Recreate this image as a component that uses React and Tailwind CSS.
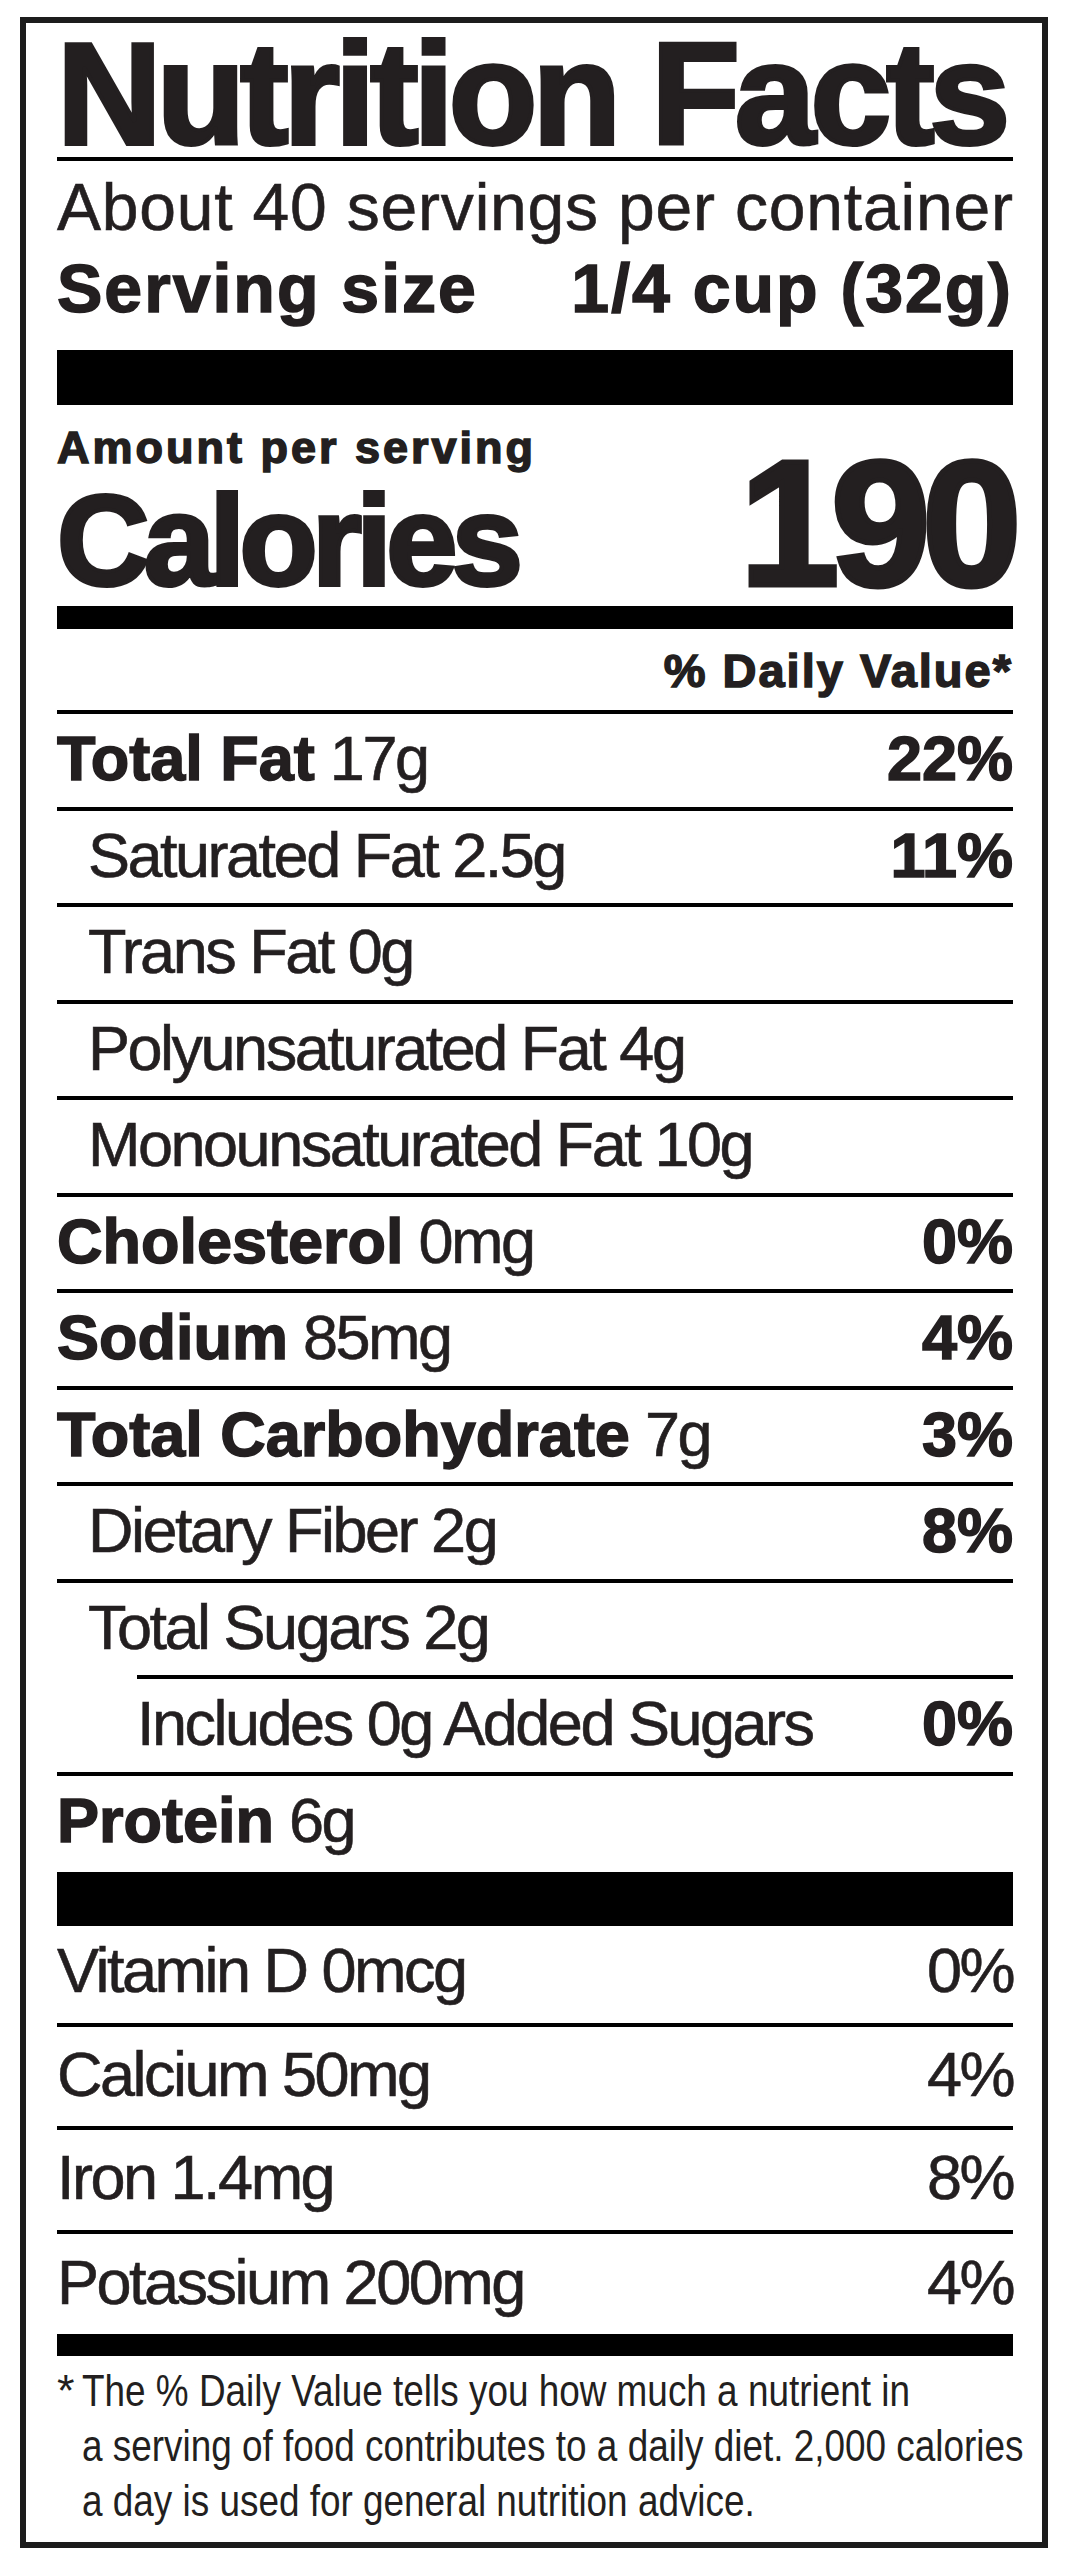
const SANS = "font-['Liberation_Sans',Arial,sans-serif]";
const HEAVY = 'font-bold [-webkit-text-stroke:1.5px_#231f20]';
const BODY = '[-webkit-text-stroke:0.6px_#231f20]';

// nutrient rows between the % Daily Value header and the protein bar
const nutrients = [
  { label: 'Total Fat', amount: '17g', dv: '22%', bold: true, h: 'h-[97px]' },
  { label: 'Saturated Fat', amount: '2.5g', dv: '11%', indent: 'pl-[31px]', h: 'h-[96px]' },
  { label: 'Trans Fat', amount: '0g', indent: 'pl-[31px]', h: 'h-[97px]' },
  { label: 'Polyunsaturated Fat', amount: '4g', indent: 'pl-[31px]', h: 'h-[96px]' },
  { label: 'Monounsaturated Fat', amount: '10g', indent: 'pl-[31px]', h: 'h-[97px]' },
  { label: 'Cholesterol', amount: '0mg', dv: '0%', bold: true, h: 'h-[96px]' },
  { label: 'Sodium', amount: '85mg', dv: '4%', bold: true, h: 'h-[97px]' },
  { label: 'Total Carbohydrate', amount: '7g', dv: '3%', bold: true, h: 'h-[96px]' },
  { label: 'Dietary Fiber', amount: '2g', dv: '8%', indent: 'pl-[31px]', h: 'h-[97px]' },
  { label: 'Total Sugars', amount: '2g', indent: 'pl-[31px]', h: 'h-[96px]' },
  { label: 'Includes 0g Added Sugars', amount: '', dv: '0%', row: 'ml-[80px]', h: 'h-[97px]' },
  { label: 'Protein', amount: '6g', bold: true, h: 'h-[100px]' },
];

const vitamins = [
  { label: 'Vitamin D 0mcg', dv: '0%', h: 'h-[97px]', lead: 'leading-[88px]', line: '' },
  { label: 'Calcium 50mg', dv: '4%', h: 'h-[103px]', lead: 'leading-[95px]', line: 'border-t-4' },
  { label: 'Iron 1.4mg', dv: '8%', h: 'h-[104px]', lead: 'leading-[95px]', line: 'border-t-4' },
  { label: 'Potassium 200mg', dv: '4%', h: 'h-[104px]', lead: 'leading-[97px]', line: 'border-t-4' },
];

function NutrientRow({ label, amount, dv, bold, indent = '', row = '', h }) {
  return (
    <div className={`flex justify-between border-t-4 border-black text-[63px] leading-[88px] ${h} ${row}`}>
      <span className={`whitespace-nowrap ${indent}`}>
        {bold ? (
          <span className={HEAVY}>{label}</span>
        ) : (
          <span className={`tracking-[-2.5px] ${BODY}`}>{label}</span>
        )}
        {amount && <span className={`tracking-[-2.5px] ${BODY}`}> {amount}</span>}
      </span>
      {dv && <span className={HEAVY}>{dv}</span>}
    </div>
  );
}

export default function App() {
  return (
    <div className="min-h-screen bg-white pt-[17px] pl-[20px]">
      <div className={`w-[1028px] border-[6px] border-[#1c1c1c] bg-white pl-[31px] pr-[29px] text-[#231f20] ${SANS}`}>
        <h1 className="pt-[11px] text-[145px] leading-[120px] font-bold tracking-[-5px] whitespace-nowrap [-webkit-text-stroke:4px_#231f20]">
          Nutrition Facts
        </h1>
        <div className="mt-[3px] h-[4px] bg-black" />

        <p className={`pt-[16px] text-[66px] leading-[60px] tracking-[0.8px] whitespace-nowrap ${BODY}`}>
          About 40 servings per container
        </p>
        <div className="flex justify-between pt-[21px] text-[68px] leading-[60px] font-bold tracking-[2px] whitespace-nowrap [-webkit-text-stroke:1.5px_#231f20]">
          <span>Serving size</span>
          <span>1/4 cup (32g)</span>
        </div>

        <div className="mt-[32px] h-[55px] bg-black" />

        <p className="pt-[20px] text-[45px] leading-[45px] font-bold tracking-[3px] [-webkit-text-stroke:1.5px_#231f20]">
          Amount per serving
        </p>
        <div className="flex h-[136px] items-baseline justify-between font-bold">
          <span className="text-[128px] leading-[100px] tracking-[-5.6px] [-webkit-text-stroke:4px_#231f20]">Calories</span>
          <span className="text-[179px] leading-[106px] tracking-[-8.5px] [-webkit-text-stroke:5px_#231f20]">190</span>
        </div>

        <div className="h-[23px] bg-black" />

        <p className="h-[81px] pt-[17px] text-right text-[47px] leading-[50px] font-bold tracking-[2px] [-webkit-text-stroke:1.5px_#231f20]">
          % Daily Value*
        </p>

        {nutrients.map((n) => (
          <NutrientRow key={n.label} {...n} />
        ))}

        <div className="h-[54px] bg-black" />

        {vitamins.map((v) => (
          <div
            key={v.label}
            className={`flex justify-between border-black text-[63px] tracking-[-2.5px] ${BODY} ${v.h} ${v.lead} ${v.line}`}
          >
            <span className="whitespace-nowrap">{v.label}</span>
            <span>{v.dv}</span>
          </div>
        ))}

        <div className="h-[22px] bg-black" />

        {/* footnote is set in a condensed face: squeeze the regular one */}
        <div className="flex pt-[7px] pb-[14px] text-[45px] leading-[55px]">
          <span className="w-[25px] shrink-0">*</span>
          <p className="origin-left scale-x-[0.82] whitespace-nowrap">
            The % Daily Value tells you how much a nutrient in
            <br />
            a serving of food contributes to a daily diet. 2,000 calories
            <br />
            a day is used for general nutrition advice.
          </p>
        </div>
      </div>
    </div>
  );
}
